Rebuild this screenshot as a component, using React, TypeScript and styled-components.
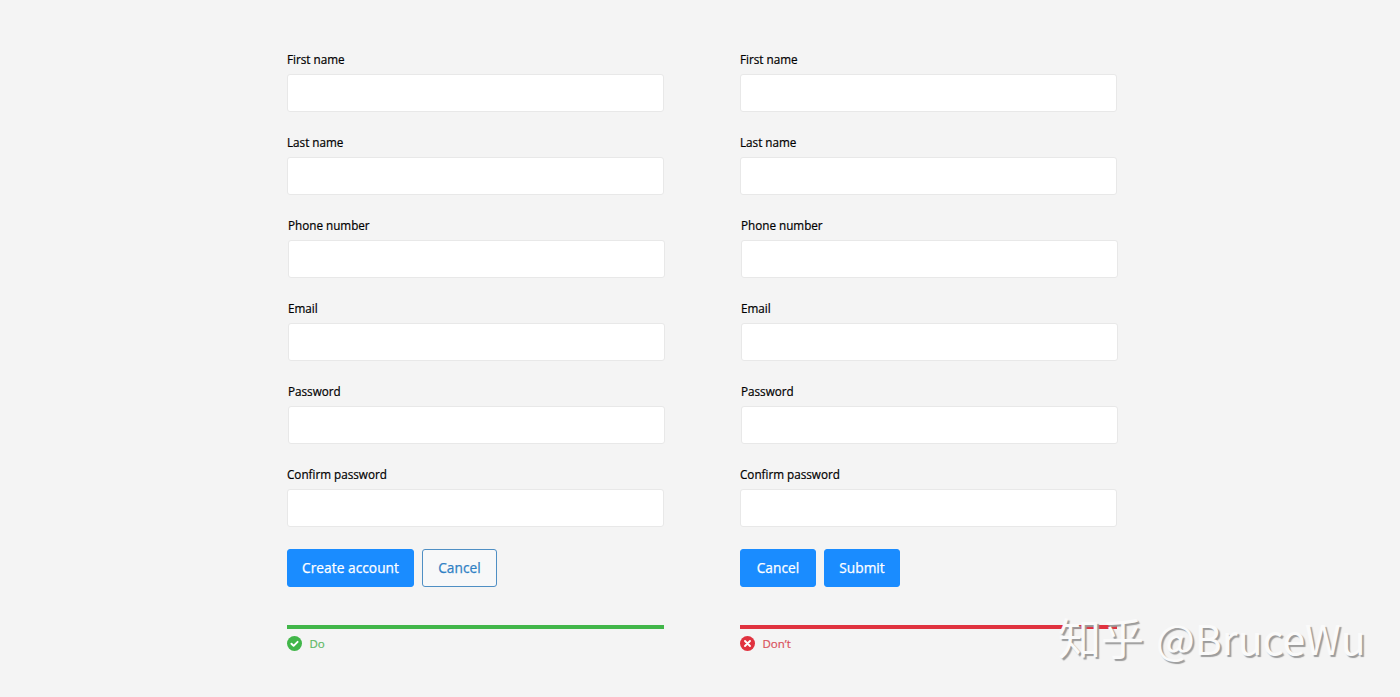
import React from "react";
import styled, { createGlobalStyle } from "styled-components";

const Global = createGlobalStyle`
  html, body { margin: 0; padding: 0; background: #f4f4f4; }
  body { font-family: "Open Sans", "Noto Sans", sans-serif; }
`;

const Page = styled.main`
  position: relative;
  width: 1400px;
  height: 697px;
  overflow: hidden;
  background: #f4f4f4;
  display: flex;
  gap: 76px;
  padding: 50px 0 0 287px;
  box-sizing: border-box;
`;

const Column = styled.section`
  width: 377px;
  display: flex;
  flex-direction: column;
`;

const Field = styled.div<{ $nudge?: boolean }>`
  height: 83px;
  margin-left: ${(p) => (p.$nudge ? "1px" : "0")};
  display: flex;
  flex-direction: column;
`;

const Label = styled.label`
  height: 24px;
  line-height: 18px;
  font-size: 11.7px;
  font-weight: 400;
  -webkit-text-stroke: 0.2px #000;
  color: #000;
`;

const Input = styled.div`
  width: 377px;
  height: 38px;
  box-sizing: border-box;
  background: #fff;
  border: 1px solid #e8e8e8;
  border-radius: 3px;
`;

const Actions = styled.div`
  display: flex;
  gap: 8px;
  height: 76px;
  padding-top: 1px;
  box-sizing: border-box;
`;

const Button = styled.button<{ $outline?: boolean; $w: number }>`
  width: ${(p) => p.$w}px;
  height: 38px;
  box-sizing: border-box;
  padding: 0 0 2px;
  border-radius: 3px;
  border: 1px solid ${(p) => (p.$outline ? "#4f8fc4" : "#1a8cff")};
  background: ${(p) => (p.$outline ? "#f7f8f9" : "#1a8cff")};
  color: ${(p) => (p.$outline ? "#2f80c4" : "#fff")};
  font-family: inherit;
  font-size: 13.7px;
  font-weight: 400;
  letter-spacing: 0.05px;
  -webkit-text-stroke: 0.25px currentColor;
`;

const Rule = styled.div<{ $color: string }>`
  height: 4px;
  margin-top: 1px;
  background: ${(p) => p.$color};
`;

const Verdict = styled.div<{ $color: string }>`
  display: flex;
  align-items: center;
  gap: 7.5px;
  margin-top: 6px;
  height: 16px;
  font-size: 11.5px;
  font-weight: 400;
  -webkit-text-stroke: 0.2px currentColor;
  color: ${(p) => p.$color};
`;

const Watermark = styled.div`
  position: absolute;
  left: 1058px;
  top: 609px;
  display: flex;
  align-items: baseline;
  gap: 12px;
  font-family: "Noto Sans CJK SC", "Noto Sans", sans-serif;
  line-height: 54px;
  white-space: nowrap;
  color: #fafafa;
  text-shadow: 2px 2px 1px #9c9c9c;
`;

const WatermarkBrand = styled.span`
  font-size: 43px;
`;

const WatermarkHandle = styled.span`
  font-size: 41px;
`;

const CheckIcon = () => (
  <svg width="15" height="15" viewBox="0 0 15 15" aria-hidden="true">
    <circle cx="7.5" cy="7.5" r="7.5" fill="#41b649" />
    <path d="M4.4 7.7l2.2 2.1 4-4" fill="none" stroke="#fff" strokeWidth="1.9" strokeLinecap="round" strokeLinejoin="round" />
  </svg>
);

const CrossIcon = () => (
  <svg width="15" height="15" viewBox="0 0 15 15" aria-hidden="true">
    <circle cx="7.5" cy="7.5" r="7.5" fill="#e0323f" />
    <path d="M5 5l5 5M10 5l-5 5" fill="none" stroke="#fff" strokeWidth="1.9" strokeLinecap="round" />
  </svg>
);

const fields = [
  { label: "First name" },
  { label: "Last name" },
  { label: "Phone number", nudge: true },
  { label: "Email", nudge: true },
  { label: "Password", nudge: true },
  { label: "Confirm password" },
];

const Fields = () => (
  <>
    {fields.map((f) => (
      <Field key={f.label} $nudge={f.nudge}>
        <Label>{f.label}</Label>
        <Input />
      </Field>
    ))}
  </>
);

export default function App() {
  return (
    <Page>
      <Global />
      <Column>
        <Fields />
        <Actions>
          <Button $w={127}>Create account</Button>
          <Button $w={75} $outline>Cancel</Button>
        </Actions>
        <Rule $color="#41b649" />
        <Verdict $color="#5cb863">
          <CheckIcon />
          Do
        </Verdict>
      </Column>
      <Column>
        <Fields />
        <Actions>
          <Button $w={76}>Cancel</Button>
          <Button $w={76}>Submit</Button>
        </Actions>
        <Rule $color="#e0323f" />
        <Verdict $color="#d9505a">
          <CrossIcon />
          Don’t
        </Verdict>
      </Column>
      <Watermark>
        <WatermarkBrand>知乎</WatermarkBrand>
        <WatermarkHandle>@BruceWu</WatermarkHandle>
      </Watermark>
    </Page>
  );
}
